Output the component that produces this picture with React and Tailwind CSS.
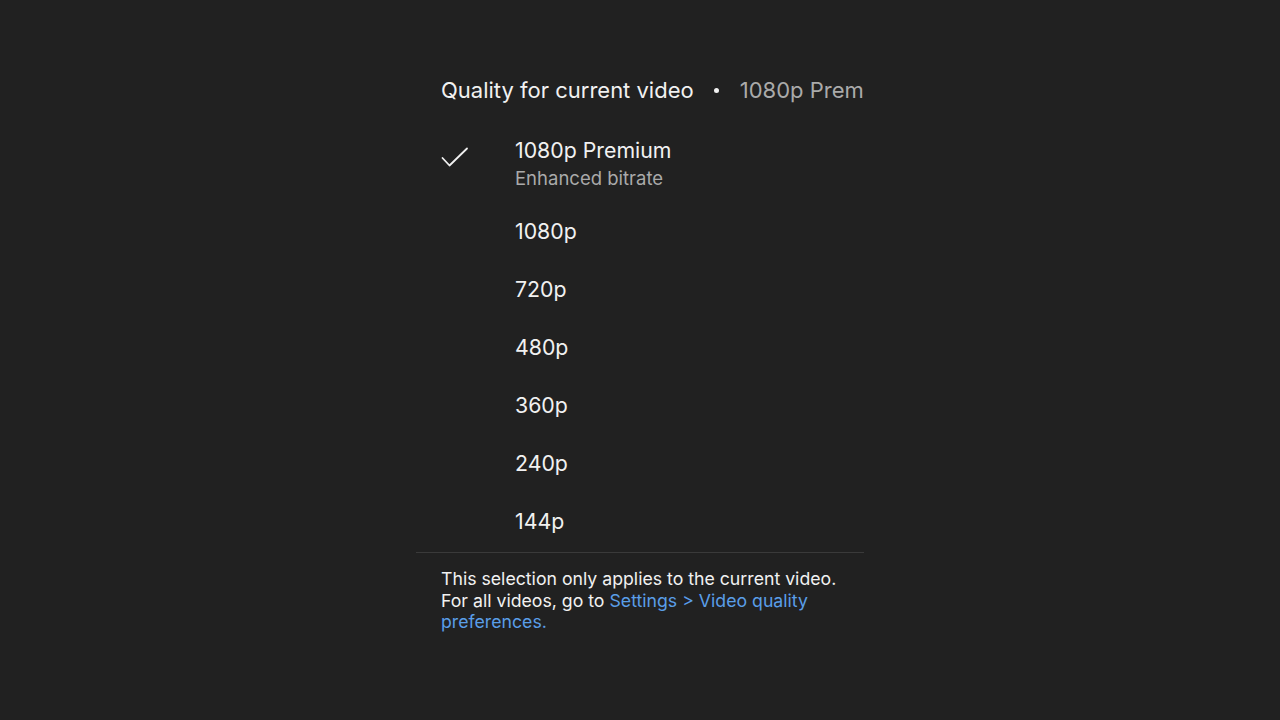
import React from "react";

const options = ["1080p", "720p", "480p", "360p", "240p", "144p"];

export default function App() {
  return (
    <div className="w-full h-[720px] bg-[#212121] flex justify-center" style={{ fontFamily: "Inter, 'Noto Sans', sans-serif" }}>
      <div className="w-[448px] pt-[74px] flex flex-col">
        <div className="pl-[25px] flex items-center overflow-hidden whitespace-nowrap h-[32px]">
          <span className="text-[22px] text-[#f1f1f1]">Quality for current video</span>
          <span className="w-[5px] h-[5px] rounded-full bg-[#f1f1f1] ml-[20px] mr-[21px] shrink-0"></span>
          <span className="text-[22px] text-[#aaaaaa]">1080p Premium</span>
        </div>

        <div className="mt-[30px] pl-[25px] flex items-start">
          <div className="w-[74px] pt-[10px] shrink-0">
            <svg width="28" height="22" viewBox="0 0 28 22" fill="none">
              <path d="M1.5 12 L8.5 19.5 L26 2.5" stroke="#f1f1f1" strokeWidth="1.8" strokeLinecap="round" strokeLinejoin="round" />
            </svg>
          </div>
          <div className="flex flex-col">
            <span className="text-[21.3px] leading-[28px] text-[#f1f1f1]">1080p Premium</span>
            <span className="text-[18.5px] leading-[28px] text-[#aaaaaa]">Enhanced bitrate</span>
          </div>
        </div>

        <div className="flex flex-col pl-[99px] mt-[11px]">
          {options.map((o) => (
            <div key={o} className="h-[58px] flex items-center text-[21.3px] text-[#f1f1f1]">
              {o}
            </div>
          ))}
        </div>

        <div className="mt-[1px] border-t border-[#3a3a3a]"></div>

        <p className="pl-[25px] pr-[20px] pt-[15px] text-[17.7px] leading-[21.5px] text-[#f1f1f1]">
          This selection only applies to the current video.
          <br />
          For all videos, go to <span className="text-[#5a9ee8]">Settings &gt; Video quality preferences.</span>
        </p>
      </div>
    </div>
  );
}
